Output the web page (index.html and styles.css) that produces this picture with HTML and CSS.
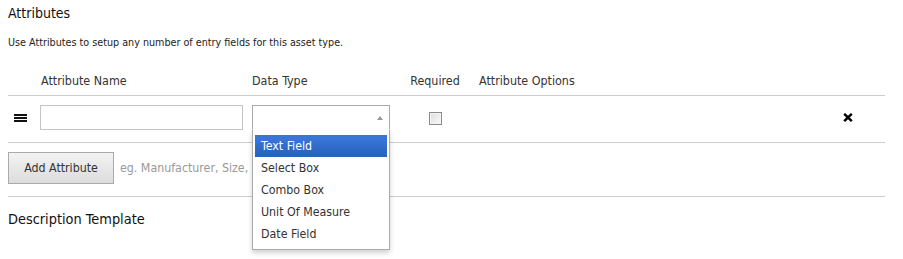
FILE: index.html
```html
<!DOCTYPE html>
<html>
<head>
<meta charset="utf-8">
<link rel="stylesheet" href="styles.css">
</head>
<body>
<div class="page">
  <h2 class="title">Attributes</h2>
  <p class="desc">Use Attributes to setup any number of entry fields for this asset type.</p>

  <div class="grid head">
    <div></div>
    <div class="h-name">Attribute Name</div>
    <div class="h-type">Data Type</div>
    <div class="h-req">Required</div>
    <div class="h-opt">Attribute Options</div>
    <div></div>
  </div>

  <div class="grid row">
    <div class="cell drag"><div class="bars"><span></span><span></span><span></span></div></div>
    <div class="cell"><div class="input"></div></div>
    <div class="cell select-wrap">
      <div class="select"><span class="arrow"></span></div>
      <ul class="drop">
        <li class="hl">Text Field</li>
        <li>Select Box</li>
        <li>Combo Box</li>
        <li>Unit Of Measure</li>
        <li>Date Field</li>
      </ul>
    </div>
    <div class="cell req"><span class="check"></span></div>
    <div class="cell"></div>
    <div class="cell del">
      <svg width="10" height="9" viewBox="0 0 10 9"><path d="M1.2 0.8 L8.8 8.2 M8.8 0.8 L1.2 8.2" stroke="#000" stroke-width="2.4" stroke-linecap="butt"/></svg>
    </div>
  </div>

  <div class="add">
    <button class="btn">Add Attribute</button>
    <span class="hint">eg. Manufacturer, Size, Color</span>
  </div>

  <h2 class="title sub">Description Template</h2>
</div>
</body>
</html>
```

FILE: styles.css
```css
* { box-sizing: border-box; }
body {
  margin: 0;
  padding: 0 8px;
  font-family: "DejaVu Sans Condensed", "DejaVu Sans", sans-serif;
  color: #222;
  background: #fff;
}
.page { width: 877px; height: 259px; }
.title {
  margin: 0;
  padding-top: 4px;
  font-size: 14px;
  font-weight: normal;
  line-height: 18px;
  color: #111;
}
.desc {
  margin: 14px 0 0;
  font-size: 10.7px;
  line-height: 14px;
  color: #222;
}
.grid {
  display: grid;
  grid-template-columns: 32px 212px 148px 70px 1fr 42px;
}
.head {
  margin-top: 20px;
  height: 26px;
  padding-bottom: 7px;
  font-size: 12.4px;
  color: #333;
  border-bottom: 1px solid #ccc;
  align-items: end;
}
.h-name { padding-left: 1px; }
.h-req { text-align: center; }
.h-opt { padding-left: 9px; }
.row {
  height: 47px;
  padding-top: 9px;
  border-bottom: 1px solid #ccc;
  align-items: start;
}
.cell {
  height: 25px;
  display: flex;
  align-items: center;
}
.drag { padding-left: 6px; }
.bars {
  display: flex;
  flex-direction: column;
  gap: 1px;
  margin-top: 1px;
}
.bars span {
  display: block;
  width: 13px;
  height: 2px;
  background: #111;
}
.input {
  width: 203px;
  height: 25px;
  border: 1px solid #c4c4c4;
  background: #fff;
}
.select-wrap { position: relative; display: block; }
.select {
  width: 138px;
  height: 25px;
  border: 1px solid #aaa;
  border-bottom-color: #fff;
  background: #fff;
  position: relative;
}
.arrow {
  position: absolute;
  right: 6px;
  top: 10px;
  width: 0; height: 0;
  border-left: 3px solid transparent;
  border-right: 3px solid transparent;
  border-bottom: 4px solid #999;
}
.drop {
  position: absolute;
  left: 0;
  top: 25px;
  width: 138px;
  margin: 0;
  padding: 5px 2px 4px 2px;
  list-style: none;
  background: #fff;
  border: 1px solid #aaa;
  border-top: 0;
  box-shadow: 0 3px 5px rgba(0,0,0,0.18);
  z-index: 5;
}
.drop li {
  height: 22px;
  line-height: 22px;
  padding-left: 6px;
  font-size: 12.3px;
  color: #333;
}
.drop li.hl {
  color: #fff;
  background: linear-gradient(#3875d7 20%, #2a62bc 90%);
}
.req { justify-content: center; padding-left: 0; }
.check {
  width: 13px;
  height: 13px;
  margin-top: 1px;
  border: 1px solid #8a8a8a;
  background: linear-gradient(135deg, #dcdcdc, #fafafa);
  box-shadow: inset 0 0 0 1px #f4f4f4;
}
.del { justify-content: flex-start; }
.add {
  display: flex;
  align-items: flex-start;
  gap: 6px;
  height: 54px;
  padding-top: 9px;
  border-bottom: 1px solid #ccc;
}
.btn {
  width: 106px;
  height: 32px;
  margin: 0;
  padding: 0;
  font-family: inherit;
  font-size: 12.3px;
  color: #333;
  border: 1px solid #aaa;
  background: linear-gradient(#f3f3f3, #dcdcdc);
}
.hint {
  font-size: 12.3px;
  color: #999;
  line-height: 32px;
  width: 132px;
  overflow: hidden;
  white-space: nowrap;
}
.sub { padding-top: 13px; font-size: 14.4px; }
```
